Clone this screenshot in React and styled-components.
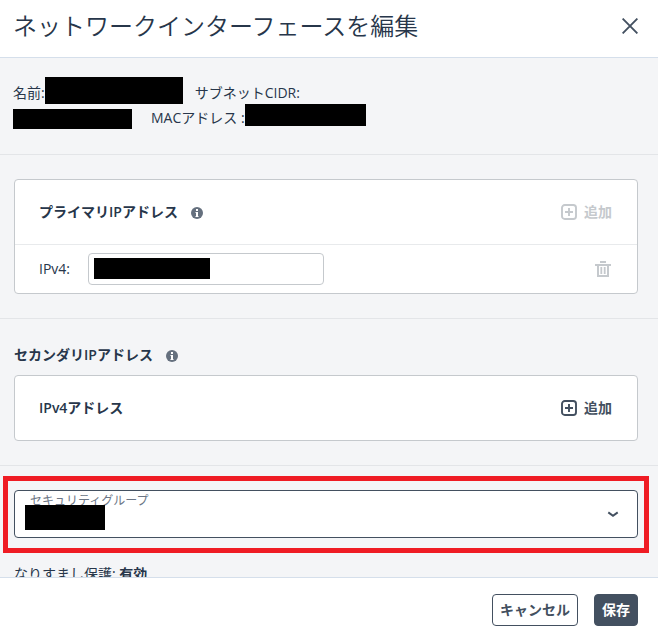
import React from 'react';
import styled, { createGlobalStyle } from 'styled-components';

const GlobalStyle = createGlobalStyle`
  * {
    box-sizing: border-box;
  }

  body {
    margin: 0;
    color: #27364a;
    font-family: 'Open Sans', 'Noto Sans CJK JP', sans-serif;
    font-size: 14px;
    line-height: 24px;
  }

  button, input, select {
    font: inherit;
    color: inherit;
    margin: 0;
  }
`;

const Dialog = styled.div`
  display: flex;
  flex-direction: column;
  height: 100vh;
  background: #fff;
`;

const Header = styled.header`
  display: flex;
  align-items: center;
  justify-content: space-between;
  padding: 10px 20px 15px 13px;
  border-bottom: 1px solid #d5dfeb;
`;

const Title = styled.h1`
  margin: 0;
  font-size: 24px;
  font-weight: 350;
  line-height: 32px;
`;

const IconButton = styled.button`
  display: flex;
  align-items: center;
  gap: 7px;
  padding: 0;
  border: 0;
  background: none;
  color: ${props => props.disabled ? '#c5c9cd' : '#435060'};
  font-weight: 600;
`;

const Body = styled.main`
  flex: 1;
  min-height: 0;
  overflow: auto;
  scrollbar-width: none;
  background: #f4f5f7;
`;

const Section = styled.section`
  padding: 24px 20px 24px 14px;
  border-bottom: 1px solid #e3e5e8;
`;

const Summary = styled(Section)`
  padding: 19px 20px 25px 13px;
  line-height: 22px;
`;

const SummaryRow = styled.div`
  display: flex;
  align-items: flex-end;
  height: ${props => props.$height}px;
`;

const Term = styled.span`
  margin-left: ${props => props.$gap || 0}px;
  white-space: pre;
`;

const Redacted = styled.span`
  flex: none;
  align-self: ${props => props.$align || 'flex-end'};
  width: ${props => props.$width}px;
  height: ${props => props.$height}px;
  background: #000;
`;

const Heading = styled.h2`
  display: flex;
  align-items: center;
  gap: 13px;
  margin: 0 0 ${props => props.$spaced ? '8px' : '0'};
  font-size: 14px;
  font-weight: 600;
`;

const Card = styled.div`
  border: 1px solid #c5c9cd;
  border-radius: 4px;
  background: #fff;
`;

const CardHead = styled.div`
  display: flex;
  align-items: center;
  justify-content: space-between;
  height: 64px;
  padding: 0 25px 0 24px;
`;

const CardRow = styled.div`
  display: flex;
  align-items: center;
  justify-content: space-between;
  padding: 8px 26px 8px 24px;
  border-top: 1px solid #e8eaec;
`;

const Field = styled.div`
  display: flex;
  align-items: center;
  gap: 18px;
`;

const InputWrap = styled.div`
  position: relative;
`;

const Input = styled.input`
  display: block;
  width: 236px;
  height: 32px;
  padding: 0 8px;
  border: 1px solid #c5c9cd;
  border-radius: 4px;
  background: #fff;
`;

const Mask = styled.span`
  position: absolute;
  top: ${props => props.$top}px;
  left: ${props => props.$left}px;
  width: ${props => props.$width}px;
  height: ${props => props.$height}px;
  background: #000;
  pointer-events: none;
`;

const SelectWrap = styled.div`
  position: relative;
`;

const SelectLabel = styled.label`
  position: absolute;
  top: 0;
  left: 16px;
  font-size: 12px;
  line-height: 22px;
  color: #6b7585;
`;

const Select = styled.select`
  display: block;
  width: 100%;
  height: 48px;
  padding: 16px 40px 0 16px;
  border: 1px solid #435060;
  border-radius: 4px;
  background: #fff;
  appearance: none;
`;

const SelectArrow = styled.svg`
  position: absolute;
  top: 16px;
  right: 16px;
  pointer-events: none;
`;

const Highlight = styled.div`
  position: absolute;
  inset: -14px -11px -15px;
  border: 5px solid #ef1c24;
  pointer-events: none;
`;

const Note = styled.p`
  margin: 24px 0 0;

  strong {
    font-weight: 700;
  }
`;

const Footer = styled.footer`
  display: flex;
  justify-content: flex-end;
  gap: 16px;
  padding: 16px 20px 12px;
  border-top: 1px solid #d5dfeb;
`;

const Button = styled.button`
  height: 32px;
  padding: 0 7px;
  border: 1px solid #435060;
  border-radius: 4px;
  background: ${props => props.$primary ? '#435060' : '#fff'};
  color: ${props => props.$primary ? '#fff' : '#435060'};
  font-weight: 600;
  line-height: 24px;
`;

const CloseIcon = () => (
  <svg width="16" height="16" viewBox="0 0 16 16" fill="none" stroke="currentColor" strokeWidth="1.9">
    <path d="M.6.6l14.8 14.8M15.4.6L.6 15.4" />
  </svg>
);

const InfoIcon = () => (
  <svg width="12" height="14" viewBox="0 -2 12 14">
    <circle cx="6" cy="6" r="6" fill="#65707e" />
    <path d="M5 2h2v2H5zM4.5 5H7v4h.5v1h-3V9H5V6h-.5z" fill="#fff" />
  </svg>
);

const AddIcon = () => (
  <svg width="16" height="16" viewBox="0 0 16 16" fill="none" stroke="currentColor" strokeWidth="1.9">
    <rect x="1" y="1" width="14" height="14" rx="2.8" />
    <path d="M8 4v8M4 8h8" />
  </svg>
);

const TrashIcon = () => (
  <svg width="16" height="16" viewBox="0 0 16 16" fill="none" stroke="currentColor">
    <path d="M5 1h6" strokeWidth="2" />
    <path d="M0 4h16" strokeWidth="2" />
    <path d="M3 4v11h10V4" strokeWidth="2" />
    <path d="M6.3 6v7M9.7 6v7" strokeWidth="1.8" />
  </svg>
);

const AddButton = ({ disabled }) => (
  <IconButton type="button" disabled={disabled}>
    <AddIcon />
    追加
  </IconButton>
);

const App = () => (
  <>
    <GlobalStyle />
    <Dialog role="dialog" aria-labelledby="dialog-title">
      <Header>
        <Title id="dialog-title">ネットワークインターフェースを編集</Title>
        <IconButton type="button" aria-label="閉じる"><CloseIcon /></IconButton>
      </Header>

      <Body>
        <Summary>
          <SummaryRow $height={27}>
            <Term>名前:</Term>
            <Redacted $width={138} $height={27} />
            <Term $gap={12}>サブネットCIDR:</Term>
          </SummaryRow>
          <SummaryRow $height={25}>
            <Redacted $width={119} $height={20} />
            <Term $gap={19}>MACアドレス :</Term>
            <Redacted $width={121} $height={22} $align="flex-start" />
          </SummaryRow>
        </Summary>

        <Section>
          <Card>
            <CardHead>
              <Heading>プライマリIPアドレス<InfoIcon /></Heading>
              <AddButton disabled />
            </CardHead>
            <CardRow>
              <Field>
                <label htmlFor="ipv4">IPv4:</label>
                <InputWrap>
                  <Input id="ipv4" type="text" />
                  <Mask $top={5} $left={6} $width={116} $height={21} />
                </InputWrap>
              </Field>
              <IconButton type="button" aria-label="削除" disabled><TrashIcon /></IconButton>
            </CardRow>
          </Card>
        </Section>

        <Section>
          <Heading $spaced>セカンダリIPアドレス<InfoIcon /></Heading>
          <Card>
            <CardHead>
              <Heading as="h3">IPv4アドレス</Heading>
              <AddButton />
            </CardHead>
          </Card>
        </Section>

        <Section>
          <SelectWrap>
            <Select id="security-group">
              <option value="" />
            </Select>
            <SelectLabel htmlFor="security-group">セキュリティグループ</SelectLabel>
            <Mask $top={15} $left={11} $width={80} $height={25} />
            <SelectArrow width="18" height="16" viewBox="0 0 18 16" fill="none" stroke="#435060" strokeWidth="2">
              <path d="M4.3 6.4L9 9.8L13.7 6.4" />
            </SelectArrow>
            <Highlight />
          </SelectWrap>
          <Note>なりすまし保護: <strong>有効</strong></Note>
        </Section>
      </Body>

      <Footer>
        <Button type="button">キャンセル</Button>
        <Button type="button" $primary>保存</Button>
      </Footer>
    </Dialog>
  </>
);

export default App;
